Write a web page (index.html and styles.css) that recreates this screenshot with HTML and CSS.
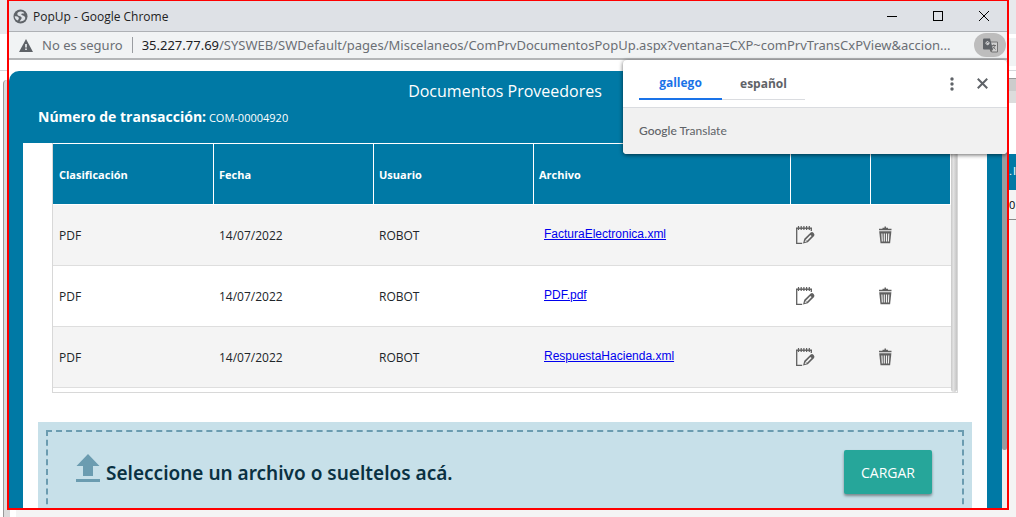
FILE: index.html
```html
<!DOCTYPE html>
<html lang="es">
<head>
<meta charset="utf-8">
<title>PopUp</title>
<link rel="stylesheet" href="styles.css">
</head>
<body>
<div class="desktop">
  <div class="edge">
    <div class="edge-tabs"></div>
    <div class="edge-bar"></div>
    <div class="edge-frame"></div>
  </div>
  <section class="window">
    <header class="titlebar">
      <svg class="globe" viewBox="0 0 15 15"><circle cx="7.5" cy="7.5" r="7" fill="#5f6368"/><path d="M10.800 3.400C8 1.600 4.200 2.600 4.300 5S8 7 8.500 8.300 8 10.300 6.600 12.400C10.800 12.600 13 10 12 8S8.600 6.400 8.300 5.400 9.800 4.400 11.300 4.600Z" fill="#dee1e6"/><path d="M1.700 7.300c1.700.1 3.700.2 4.100 1.600.3 1-.7 1.300-.8 2.700C3.100 10.900 1.700 9.400 1.700 7.300Z" fill="#dee1e6"/></svg>
      <h1 class="window-title">PopUp - Google Chrome</h1>
      <div class="window-buttons">
        <button class="window-button" aria-label="Minimizar"><svg viewBox="0 0 10 10" width="10" height="10"><path d="M0 5.500h10" stroke="#000"/></svg></button>
        <button class="window-button" aria-label="Maximizar"><svg viewBox="0 0 10 10" width="10" height="10"><rect x=".5" y=".5" width="9" height="9" fill="none" stroke="#000"/></svg></button>
        <button class="window-button" aria-label="Cerrar"><svg viewBox="0 0 10 10" width="10" height="10"><path d="M0 0l10 10M10 0L0 10" stroke="#000"/></svg></button>
      </div>
    </header>
    <div class="toolbar">
      <svg class="warning" viewBox="0 0 14 13"><path d="M7 0l7 13H0Z" fill="#5f6368"/><path d="M6.200 5h1.600v3.500H6.200ZM6.200 9.500h1.600V11H6.200Z" fill="#f1f3f4"/></svg>
      <span class="security">No es seguro</span>
      <div class="url"><span class="host">35.227.77.69</span>/SYSWEB/SWDefault/pages/Miscelaneos/ComPrvDocumentosPopUp.aspx?ventana=CXP~comPrvTransCxPView&amp;accion...</div>
      <button class="translate-button" aria-label="Traducir esta página"><svg viewBox="0 0 15 15" width="15" height="15"><path d="M6 4h8.500v10H8.500Z" fill="#d0d0d0" stroke="#757575"/><path d="M0 1.500Q0 .5 1 .5h6l3 11H1q-1 0-1-1Z" fill="#5f6368"/><path d="M6.800 5H4.700v1h1a1.500 1.500 0 1 1-.2-2" fill="none" stroke="#eee" stroke-width=".9"/><path d="M8.500 7.500H13M10.800 6.300v1.200M12 7.500c-.4 1.500-1.400 2.700-2.500 3.300M9.800 8.500l2.700 3M7 11.500h2.500l-1.500 2Z" fill="none" stroke="#666" stroke-width=".9"/></svg></button>
    </div>
    <div class="viewport">
      <main class="panel">
        <div class="panel-head">
          <h2 class="panel-title">Documentos Proveedores</h2>
          <p class="transaction"><strong class="transaction-label">Número de transacción:</strong> COM-00004920</p>
        </div>
        <div class="panel-body">
          <div class="table-box">
            <table class="documents">
              <colgroup><col class="col-first"><col class="col-text"><col class="col-text"><col><col class="col-icon"><col class="col-icon"></colgroup>
              <thead><tr><th>Clasificación</th><th>Fecha</th><th>Usuario</th><th>Archivo</th><th></th><th></th></tr></thead>
              <tbody>
                <tr><td>PDF</td><td>14/07/2022</td><td>ROBOT</td><td class="file"><a href="#">FacturaElectronica.xml</a></td>
                  <td class="tool"><button class="action" aria-label="Editar"><svg class="icon" viewBox="0 0 20 20"><use href="#edit"/></svg></button></td><td class="tool"><button class="action" aria-label="Eliminar"><svg class="icon" viewBox="0 0 20 20"><use href="#trash"/></svg></button></td></tr>
                <tr><td>PDF</td><td>14/07/2022</td><td>ROBOT</td><td class="file"><a href="#">PDF.pdf</a></td>
                  <td class="tool"><button class="action" aria-label="Editar"><svg class="icon" viewBox="0 0 20 20"><use href="#edit"/></svg></button></td><td class="tool"><button class="action" aria-label="Eliminar"><svg class="icon" viewBox="0 0 20 20"><use href="#trash"/></svg></button></td></tr>
                <tr><td>PDF</td><td>14/07/2022</td><td>ROBOT</td><td class="file"><a href="#">RespuestaHacienda.xml</a></td>
                  <td class="tool"><button class="action" aria-label="Editar"><svg class="icon" viewBox="0 0 20 20"><use href="#edit"/></svg></button></td><td class="tool"><button class="action" aria-label="Eliminar"><svg class="icon" viewBox="0 0 20 20"><use href="#trash"/></svg></button></td></tr>
              </tbody>
            </table>
            <div class="table-scroll"></div>
          </div>
          <div class="dropzone">
            <div class="dropzone-inner">
              <svg class="upload" viewBox="0 0 24 28"><path d="M12 0l11.500 12H17v10H7V12H.5ZM0 25h24v3H0Z" fill="#6b9cb0"/></svg>
              <p class="drop-text">Seleccione un archivo o sueltelos acá.</p>
              <button class="load">CARGAR</button>
            </div>
          </div>
        </div>
      </main>
      <div class="page-scroll"><div class="page-thumb"></div></div>
    </div>
    <aside class="translate">
      <div class="translate-head">
        <div class="tabs"><button class="tab selected">gallego</button><button class="tab">español</button></div>
        <button class="plain" aria-label="Opciones"><svg viewBox="0 0 4 14" width="4" height="14" fill="#5f6368"><circle cx="2" cy="2" r="1.700"/><circle cx="2" cy="7" r="1.700"/><circle cx="2" cy="12" r="1.700"/></svg></button>
        <button class="plain" aria-label="Cerrar"><svg viewBox="0 0 10 10" width="11" height="11"><path d="M.7.7l8.600 8.600M9.300.7L.7 9.300" stroke="#5f6368" stroke-width="1.800"/></svg></button>
      </div>
      <div class="translate-foot"><span class="google">Google</span> Translate</div>
    </aside>
  </section>
  <div class="edge">
    <div class="edge-tabs"></div>
    <div class="edge-bar edge-address"></div>
    <div class="edge-header"></div>
    <div class="edge-space"></div>
    <div class="edge-blue"><span>.</span><span>I</span></div>
    <div class="edge-cell">0</div>
    <div class="edge-rest"></div>
  </div>
  <div class="floor"><div class="floor-gap"></div></div>
</div>
<svg width="0" height="0" class="symbols">
  <symbol id="edit" viewBox="0 0 20 20"><path d="M1.700 3v15.300h5.500M16.300 3v3" fill="none" stroke="#606060" stroke-width="1.300"/><path d="M1 3.200h16" stroke="#606060" stroke-width="1.400"/><path d="M3.500 1v4M6.200 1v4M8.900 1v4M11.600 1v4M14.300 1v4" stroke="#606060" stroke-width="1.200"/><path d="M8 18.600l1.300-4.800L15.700 7.500q1.500-1 2.900.4t.5 3L12.800 17.300Z" fill="#606060"/><path d="M11.300 15.300l4.700-4.800" stroke="#f4f4f4" stroke-width="1.700"/><path d="M9.700 17l.6-2 1.500 1.500Z" fill="#f4f4f4"/></symbol>
  <symbol id="trash" viewBox="0 0 20 20"><path d="M4 4.500h12.500M7.500 3.400h5.500M9.500 2.200h1.500" stroke="#606060" stroke-width="1.300"/><path d="M4.200 6.200h12.200l-1.300 12.100H5.500Z" fill="#606060"/><path d="M6.900 8.500l.4 8M9.300 8.500v8M11.500 8.500v8M13.800 8.500l-.4 8" stroke="#f4f4f4" stroke-width="1.100"/></symbol>
</svg>
</body>
</html>
```
FILE: styles.css
```css
* { box-sizing: border-box; }
body { margin: 0; font-family: "Open Sans", "Noto Sans", sans-serif; font-size: 12px; color: #212529; }
button { border: 0; padding: 0; background: none; font: inherit; color: inherit; display: flex; align-items: center; justify-content: center; }
h1, h2, p { margin: 0; font-weight: 400; }
.symbols { position: absolute; }

.desktop { display: grid; grid-template: minmax(0, 1fr) 7px / 7px minmax(0, 1fr) 7px; height: 100vh; overflow: hidden; background: #fff; }
.edge { display: flex; flex-direction: column; overflow: hidden; }
.edge-tabs { height: 34px; background: #e8eaed; flex: none; }
.edge-bar { height: 37px; border-bottom: 1px solid #d5d7da; flex: none; }
.edge-address { background: linear-gradient(#fff 4px, #f1f3f4 4px, #f1f3f4 32px, #fff 32px); }
.edge-frame { flex: 1; margin: 9px 0 0 3px; border-left: 1px solid #999; border-top-left-radius: 4px; background: #dcdcdc; }
.edge-header { height: 25px; margin-top: 7px; border-top: 1px solid #999; background: linear-gradient(#ccc 12px, #dcdcdc 12px); flex: none; }
.edge-space { height: 51px; flex: none; }
.edge-blue { display: flex; justify-content: space-between; height: 36px; background: #0079a5; color: #fff; font-family: "Liberation Sans", Arial, sans-serif; font-size: 11px; line-height: 34px; flex: none; }
.edge-cell { height: 30px; background: #f4f4f4; border-bottom: 1px solid #888; color: #000; font-size: 11px; line-height: 30px; flex: none; }
.edge-rest { flex: 1; background: #f4f4f4; }
.floor { grid-column: 1 / -1; margin-left: 3px; border-left: 1px solid #999; background: #f4f4f4; }
.floor-gap { width: 12px; height: 100%; background: #fff; border-left: 6px solid #dcdcdc; }

.window { position: relative; display: flex; flex-direction: column; overflow: hidden; border: 2px solid #f00; border-top-width: 1px; background: #fff; }
.titlebar { display: flex; align-items: center; flex: none; height: 31px; padding-left: 4px; gap: 5px; background: #dee1e6; border-bottom: 1px solid #aeb1b5; }
.globe { width: 15px; height: 15px; }
.window-title { font-size: 12px; color: #222; }
.window-buttons { display: flex; margin-left: auto; }
.window-button { width: 46px; height: 30px; }
.toolbar { display: flex; align-items: center; flex: none; height: 28px; padding-left: 10px; background: #f1f3f4; border-bottom: 2px solid #b4b6b8; font-family: "Noto Sans", sans-serif; font-size: 13px; color: #6b6f74; }
.warning { width: 14px; height: 13px; flex: none; }
.security { margin-left: 9px; padding-right: 9px; border-right: 1px solid #9a9da1; line-height: 16px; white-space: nowrap; }
.url { flex: 1; min-width: 0; margin-left: 9px; overflow: hidden; white-space: nowrap; }
.host { color: #202124; }
.translate-button { width: 32px; height: 24px; margin-right: 1px; border-radius: 12px; background: #bdbdbd; flex: none; }

.viewport { flex: 1; display: flex; min-height: 0; padding-top: 11px; overflow: hidden; }
.panel { flex: 1; min-width: 0; height: max-content; padding: 0 15px 14px 14px; border-top-left-radius: 10px; background: #0079a5; color: #fff; }
.panel-head { height: 72px; padding-top: 7px; }
.panel-title { font-size: 16px; line-height: 26px; text-align: center; }
.transaction { padding-left: 15px; font-size: 11px; line-height: 26px; }
.transaction-label { font-size: 14px; font-weight: 700; }
.panel-body { background: #fff; color: #212529; padding: 0 15px 15px; }
.table-box { display: flex; margin: 0 14px; height: 250px; border: 1px solid #d8d8d8; border-top: 0; }
.documents { flex: 1; width: 100%; height: max-content; table-layout: fixed; border-collapse: separate; border-spacing: 0; }
.col-first { width: 161px; }
.col-text { width: 160px; }
.col-icon { width: 80px; }
.documents th { height: 62px; padding: 0 5px; background: #0079a5; border: 1px solid #fff; border-width: 1px 1px 1px 0; color: #fff; text-align: left; font-size: 11px; font-weight: 700; }
.documents td { height: 61px; padding: 0 5px; border-bottom: 1px solid #dedede; }
.documents th:first-child, .documents td:first-child { padding-left: 6px; }
.documents tbody tr:nth-child(odd) { background: #f4f4f4; }
.documents .file { padding: 0 10px 2px; font-family: "Liberation Sans", Arial, sans-serif; }
.documents .tool { padding: 0 4px; }
.file a { color: #00e; }
.icon { width: 20px; height: 20px; }
.table-scroll { width: 6px; border-radius: 0 0 3px 3px; background: linear-gradient(90deg, #c8c8c8, #e2e2e2 40%, #c4c4c4); flex: none; }
.dropzone { margin-top: 29px; padding: 8px 8px 14px; background: #c7e0e9; }
.dropzone-inner { display: flex; align-items: center; height: 84px; padding: 0 30px 0 28px; border: 2px dashed #6b9cb0; }
.upload { width: 24px; height: 28px; margin-bottom: 8px; flex: none; }
.drop-text { margin-left: 6px; padding-top: 2px; font-family: "Noto Sans", "Open Sans", sans-serif; font-size: 19px; font-weight: 600; color: #0a3142; }
.load { width: 88px; height: 44px; margin-left: auto; border-radius: 2px; background: #26a69a; color: #fff; font-size: 14px; box-shadow: 0 2px 3px rgba(0, 0, 0, .4); flex: none; }
.page-scroll { width: 5px; height: 448px; background: #eee; flex: none; }
.page-thumb { height: 379px; background: #999ca0; border-radius: 0 0 2px 2px; }

.translate { position: absolute; top: 59px; right: 0; width: 384px; border-radius: 4px; overflow: hidden; background: #fff; box-shadow: 0 1px 4px rgba(0, 0, 0, .6); }
.translate-head { display: flex; align-items: center; height: 48px; padding: 0 9px 0 16px; border-bottom: 1px solid #dadce0; }
.tabs { display: flex; margin-right: auto; }
.tab { width: 83px; height: 32px; border-bottom: 1px solid #dadce0; font-size: 12px; font-weight: 700; color: #5f6368; }
.tab.selected { border-bottom: 2px solid #1a73e8; color: #1a73e8; }
.plain { width: 31px; height: 32px; }
.translate-foot { height: 46px; padding-left: 16px; background: #f1f1f1; color: #5f6368; font-family: Lato, sans-serif; font-size: 12px; line-height: 46px; }
.google { font-weight: 500; }
```
